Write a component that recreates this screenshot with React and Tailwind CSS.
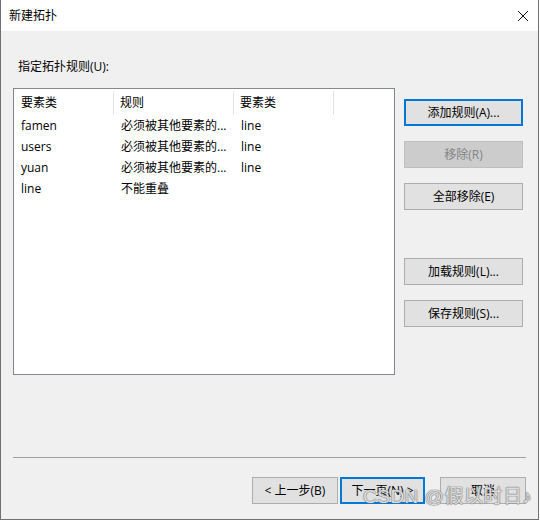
const font = { fontFamily: '"Open Sans", "Noto Sans CJK SC", sans-serif' }

const rows = [
  { cls: 'famen', rule: '必须被其他要素的...', other: 'line' },
  { cls: 'users', rule: '必须被其他要素的...', other: 'line' },
  { cls: 'yuan', rule: '必须被其他要素的...', other: 'line' },
  { cls: 'line', rule: '不能重叠', other: '' },
]

function Btn({ children, focus = false, disabled = false, className = '' }) {
  const tone = disabled
    ? 'border border-[#bfbfbf] bg-[#cccccc] text-[#838383]'
    : focus
      ? 'border-2 border-[#0078d7] bg-[#e1e1e1] text-black'
      : 'border border-[#adadad] bg-[#e1e1e1] text-black'
  return (
    <div className={`flex h-[27px] items-center justify-center text-[12px] ${tone} ${className}`}>
      {children}
    </div>
  )
}

export default function App() {
  return (
    <div className="relative h-[521px] w-[540px] bg-white" style={font}>
      <div className="flex h-[520px] w-[539px] flex-col border-x border-b border-[#707070] bg-[#f0f0f0]">
        <div className="flex h-[31px] items-center justify-between bg-white pl-[8px] pr-[9px] text-[12px] text-black">
          <span>新建拓扑</span>
          <svg viewBox="0 0 12 12" className="h-[12px] w-[12px]" fill="none">
            <path d="M1 1l10 10M11 1L1 11" stroke="#111" strokeWidth="1" />
          </svg>
        </div>

        <div className="pl-[17px] pt-[28px] text-[12px] leading-[16px] text-black">指定拓扑规则(U):</div>

        <div className="mt-[13px] flex pl-[12px]">
          <div className="h-[287px] w-[382px] border border-[#828790] bg-white text-[12px] text-black">
            <div className="flex h-[26px] items-stretch pt-[2px]">
              <div className="flex w-[100px] items-center border-r border-[#e5e5e5] pl-[7px]">要素类</div>
              <div className="flex w-[120px] items-center border-r border-[#e5e5e5] pl-[6px]">规则</div>
              <div className="flex w-[100px] items-center border-r border-[#e5e5e5] pl-[6px]">要素类</div>
            </div>
            {rows.map((r) => (
              <div key={r.cls} className="flex h-[21px] items-center">
                <div className="w-[100px] pl-[7px]">{r.cls}</div>
                <div className="w-[120px] pl-[7px]">{r.rule}</div>
                <div className="w-[100px] pl-[7px]">{r.other}</div>
              </div>
            ))}
          </div>

          <div className="ml-[9px] flex w-[119px] flex-col pt-[11px]">
            <Btn focus>添加规则(A)...</Btn>
            <Btn disabled className="mt-[15px]">移除(R)</Btn>
            <Btn className="mt-[15px]">全部移除(E)</Btn>
            <Btn className="mt-[48px]">加载规则(L)...</Btn>
            <Btn className="mt-[15px]">保存规则(S)...</Btn>
          </div>
        </div>

        <div className="ml-[12px] mt-[82px] h-px w-[513px] bg-[#a0a0a0]" />

        <div className="mt-[19px] flex pl-[251px]">
          <Btn className="w-[86px]">&lt; 上一步(B)</Btn>
          <Btn focus className="ml-[2px] w-[85px]">下一页(N) &gt;</Btn>
          <Btn className="ml-[15px] w-[86px]">取消</Btn>
        </div>
      </div>

      <div
        className="pointer-events-none absolute left-[363px] top-[484px] text-[19px] leading-[26px] tracking-[0.5px]"
        style={{
          fontFamily: '"Liberation Sans", "Noto Sans CJK SC", sans-serif',
          color: 'rgba(255,255,255,0.75)',
          textShadow: '0 0 1px #777, 0 0 1px #777, 0 0 1px #777',
        }}
      >
        CSDN @假以时日♪
      </div>
    </div>
  )
}
